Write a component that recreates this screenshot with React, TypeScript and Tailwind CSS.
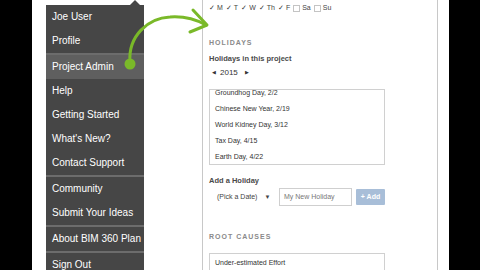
import React from 'react';

const menuGroups: string[][] = [
  ['Joe User', 'Profile'],
  ['Project Admin', 'Help', 'Getting Started', "What's New?", 'Contact Support'],
  ['Community', 'Submit Your Ideas'],
  ['About BIM 360 Plan'],
  ['Sign Out'],
];

const days = [
  { label: 'M', on: true },
  { label: 'T', on: true },
  { label: 'W', on: true },
  { label: 'Th', on: true },
  { label: 'F', on: true },
  { label: 'Sa', on: false },
  { label: 'Su', on: false },
];

const holidays = [
  'Groundhog Day, 2/2',
  'Chinese New Year, 2/19',
  'World Kidney Day, 3/12',
  'Tax Day, 4/15',
  'Earth Day, 4/22',
];

const App: React.FC = () => {
  return (
    <div className="relative flex w-[480px] h-[270px] overflow-hidden bg-black font-['Liberation_Sans',Arial,sans-serif]">
      <div className="w-[32px] shrink-0 bg-black" />

      <div className="flex w-[417px] shrink-0 bg-white">
        {/* user dropdown menu */}
        <div className="relative ml-[14px] mt-[5px] w-[98px] shrink-0 bg-[#464646]">
          <div className="absolute -top-[5px] left-[84px] w-0 h-0 border-x-[5px] border-x-transparent border-b-[5px] border-b-[#464646]" />
          {menuGroups.map((group, gi) => (
            <div key={gi} className={gi > 0 ? 'border-t-2 border-[#6c6c6c]' : ''}>
              {group.map((item) => (
                <div
                  key={item}
                  className={`h-[24px] px-[6px] leading-[24px] text-[10px] text-white whitespace-nowrap ${
                    item === 'Project Admin' ? 'bg-[#5f5f5f]' : ''
                  }`}
                >
                  {item}
                </div>
              ))}
            </div>
          ))}
        </div>

        {/* settings panel */}
        <div className="ml-[58px] w-[236px] shrink-0 border-x border-[#c8c8c8] pl-[6px]">
          <div className="mt-[3px] flex h-[10px] items-center gap-[3px] text-[7px] text-[#444]">
            {days.map((d) => (
              <span key={d.label} className="flex items-center gap-[2px]">
                {d.on ? (
                  <span className="text-[7px] text-[#333]">✓</span>
                ) : (
                  <span className="inline-block w-[7px] h-[7px] border border-[#c4c4c4]" />
                )}
                {d.label}
              </span>
            ))}
          </div>

          <div className="mt-[25px] h-[10px] leading-[10px] text-[7px] font-bold tracking-[1px] text-[#8a8a8a]">
            HOLIDAYS
          </div>
          <div className="mt-[6px] h-[10px] leading-[10px] text-[7.5px] font-bold text-[#4a4a4a]">
            Holidays in this project
          </div>
          <div className="mt-[4px] flex h-[10px] items-center text-[8px] text-[#333]">
            <span className="ml-[3px] text-[5px]">◀</span>
            <span className="ml-[4px]">2015</span>
            <span className="ml-[7px] text-[5px]">▶</span>
          </div>

          <div className="mt-[11px] h-[76px] w-[176px] overflow-hidden border border-[#d0d0d0]">
            <div className="-mt-[5px]">
              {holidays.map((h) => (
                <div key={h} className="h-[16px] pl-[5px] leading-[16px] text-[7px] text-[#333]">
                  {h}
                </div>
              ))}
            </div>
          </div>

          <div className="mt-[11px] h-[10px] leading-[10px] text-[7.5px] font-bold text-[#4a4a4a]">
            Add a Holiday
          </div>
          <div className="mt-[2px] flex h-[18px] items-center text-[7px]">
            <div className="flex w-[70px] items-center pl-[8px] text-[#444]">
              <span>(Pick a Date)</span>
              <span className="ml-[7px] text-[6px]">▼</span>
            </div>
            <div className="flex h-[18px] w-[73px] items-center border border-[#cfcfcf] pl-[4px] text-[#777]">
              My New Holiday
            </div>
            <div className="ml-[4px] flex h-[16px] w-[29px] items-center justify-center rounded-[1px] bg-[#a8bed8] font-bold text-white">
              + Add
            </div>
          </div>

          <div className="mt-[26px] h-[10px] leading-[10px] text-[7px] font-bold tracking-[1px] text-[#8a8a8a]">
            ROOT CAUSES
          </div>
          <div className="mt-[11px] h-[30px] w-[176px] border border-[#d0d0d0] pl-[5px] pt-[4px] text-[7px] text-[#333]">
            Under-estimated Effort
          </div>
        </div>
      </div>

      <div className="flex-1 bg-black" />

      {/* green callout arrow */}
      <svg
        className="pointer-events-none absolute inset-0"
        width="480"
        height="270"
        viewBox="0 0 480 270"
      >
        <path
          d="M130 62 C 128 36, 148 18, 170 17 C 184 16, 197 20, 206 25"
          fill="none"
          stroke="#7ab929"
          strokeWidth="3"
          strokeLinecap="round"
        />
        <path
          d="M193 10 L207 25 L190 32"
          fill="none"
          stroke="#7ab929"
          strokeWidth="3"
          strokeLinecap="round"
          strokeLinejoin="round"
        />
        <circle cx="130" cy="64" r="5.5" fill="#7ab929" />
      </svg>
    </div>
  );
};

export default App;
